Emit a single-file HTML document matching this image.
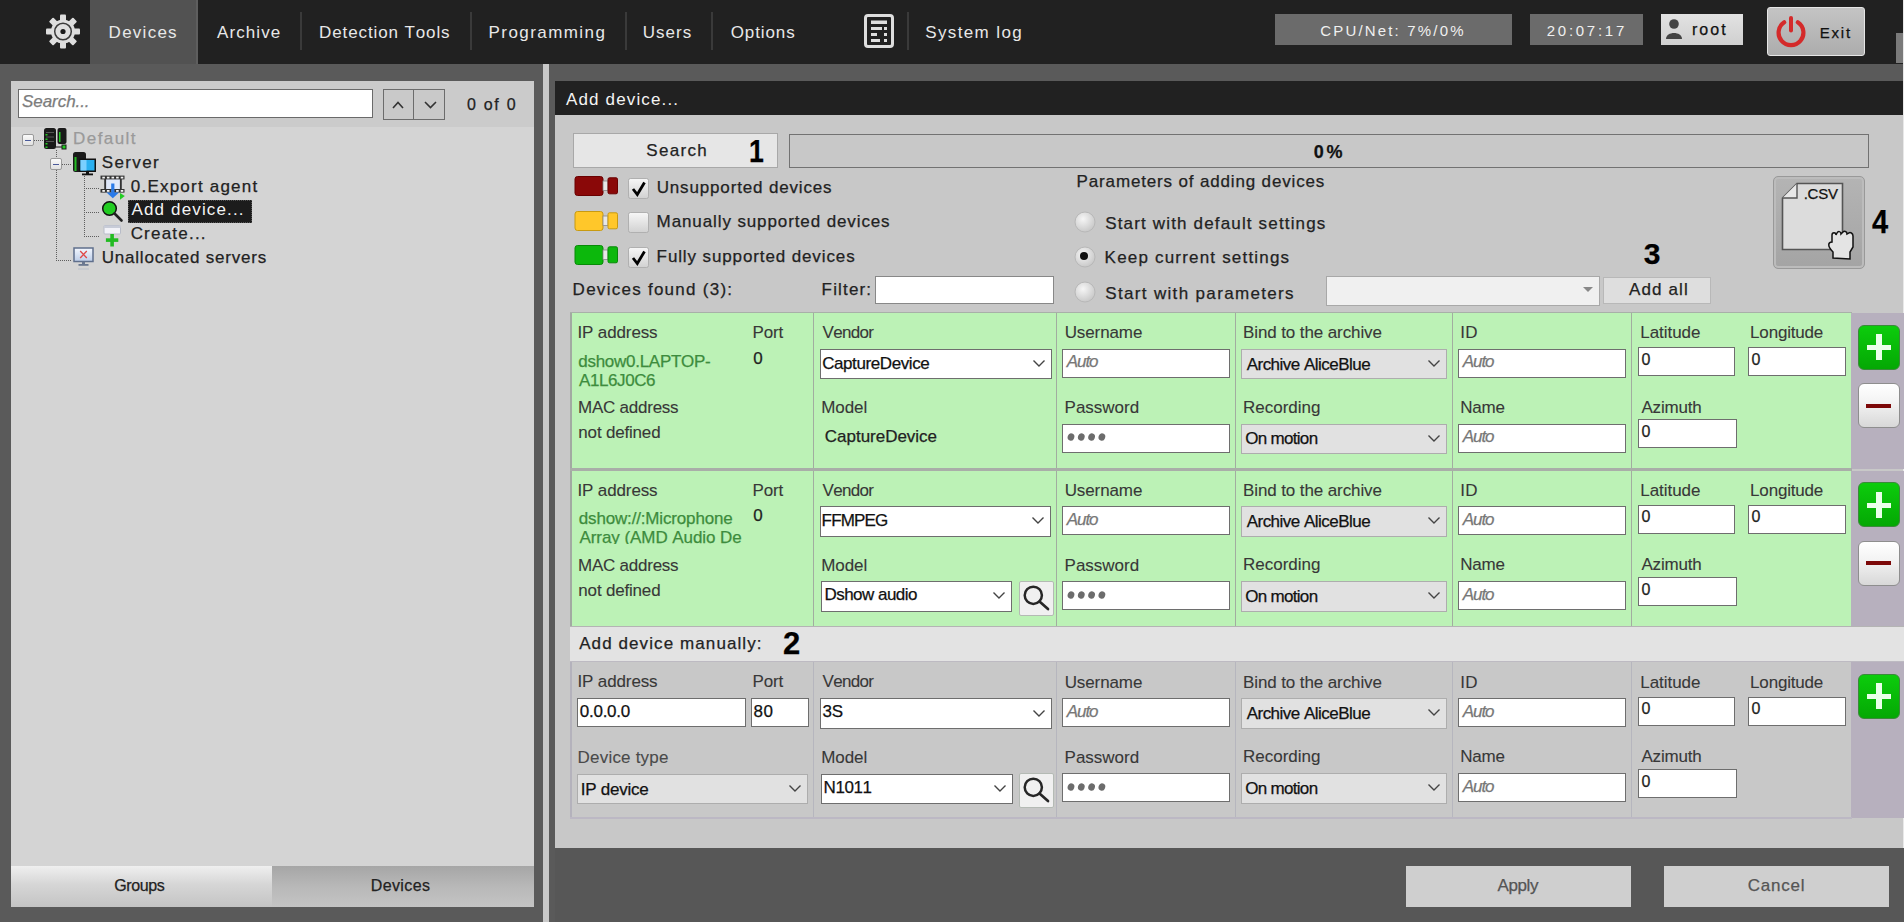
<!DOCTYPE html>
<html><head><meta charset="utf-8"><style>
html,body{margin:0;padding:0;}
body{width:1904px;height:922px;position:relative;overflow:hidden;background:#5a5a5a;font-family:"Liberation Sans",sans-serif;}
.a{position:absolute;}
.t{position:absolute;white-space:nowrap;line-height:1;font-kerning:none;-webkit-text-stroke:0.25px currentColor;}
svg.a{overflow:visible;}
</style></head><body>
<div class="a" style="left:0px;top:0px;width:1904px;height:922px;background:#5a5a5a;"></div>
<div class="a" style="left:0px;top:0px;width:1904px;height:64px;background:#212121;"></div>
<svg class="a" style="left:31px;top:0px;" width="64" height="64" viewBox="0 0 64 64"><circle cx="32" cy="31.5" r="12" fill="#dedede"/><rect x="29" y="14.5" width="6" height="8" rx="1" transform="rotate(0 32 31.5)" fill="#dedede"/><rect x="29" y="14.5" width="6" height="8" rx="1" transform="rotate(45 32 31.5)" fill="#dedede"/><rect x="29" y="14.5" width="6" height="8" rx="1" transform="rotate(90 32 31.5)" fill="#dedede"/><rect x="29" y="14.5" width="6" height="8" rx="1" transform="rotate(135 32 31.5)" fill="#dedede"/><rect x="29" y="14.5" width="6" height="8" rx="1" transform="rotate(180 32 31.5)" fill="#dedede"/><rect x="29" y="14.5" width="6" height="8" rx="1" transform="rotate(225 32 31.5)" fill="#dedede"/><rect x="29" y="14.5" width="6" height="8" rx="1" transform="rotate(270 32 31.5)" fill="#dedede"/><rect x="29" y="14.5" width="6" height="8" rx="1" transform="rotate(315 32 31.5)" fill="#dedede"/><circle cx="32" cy="31.5" r="8.3" fill="none" stroke="#3a3a3a" stroke-width="1.5"/><circle cx="32" cy="31.5" r="2.6" fill="#1a1a1a"/></svg>
<div class="a" style="left:90px;top:0px;width:108px;height:64px;background:#525252;border-right:2px solid #5e5e5e;box-sizing:border-box;"></div>
<div class="t" style="left:108.61px;top:23.61px;font-size:17px;color:#e8e8e8;letter-spacing:1.258px;-webkit-text-stroke:0;">Devices</div>
<div class="t" style="left:216.97px;top:23.61px;font-size:17px;color:#e8e8e8;letter-spacing:1.100px;-webkit-text-stroke:0;">Archive</div>
<div class="a" style="left:300px;top:12px;width:2px;height:38px;background:#3a3a3a;"></div>
<div class="t" style="left:319.11px;top:23.61px;font-size:17px;color:#e8e8e8;letter-spacing:0.885px;-webkit-text-stroke:0;">Detection Tools</div>
<div class="a" style="left:470px;top:12px;width:2px;height:38px;background:#3a3a3a;"></div>
<div class="t" style="left:488.61px;top:23.61px;font-size:17px;color:#e8e8e8;letter-spacing:1.426px;-webkit-text-stroke:0;">Programming</div>
<div class="a" style="left:625px;top:12px;width:2px;height:38px;background:#3a3a3a;"></div>
<div class="t" style="left:642.69px;top:23.61px;font-size:17px;color:#e8e8e8;letter-spacing:1.058px;-webkit-text-stroke:0;">Users</div>
<div class="a" style="left:711px;top:12px;width:2px;height:38px;background:#3a3a3a;"></div>
<div class="t" style="left:730.69px;top:23.61px;font-size:17px;color:#e8e8e8;letter-spacing:0.905px;-webkit-text-stroke:0;">Options</div>
<svg class="a" style="left:862px;top:12px;" width="34" height="38" viewBox="0 0 34 38"><rect x="3.5" y="3.5" width="27" height="31" rx="2.5" fill="none" stroke="#dedede" stroke-width="3"/><rect x="9" y="8.5" width="16" height="3.5" fill="#dedede"/><rect x="9" y="15" width="11" height="3" fill="#dedede"/><rect x="22" y="15" width="3" height="3" fill="#dedede"/><rect x="9" y="21" width="6" height="3" fill="#dedede"/><rect x="22" y="21" width="3" height="3" fill="#dedede"/><rect x="9" y="27" width="9" height="3" fill="#dedede"/><rect x="22" y="27" width="3" height="3" fill="#dedede"/></svg>
<div class="a" style="left:907px;top:12px;width:2px;height:38px;background:#3a3a3a;"></div>
<div class="t" style="left:925.23px;top:23.61px;font-size:17px;color:#e8e8e8;letter-spacing:1.376px;-webkit-text-stroke:0;">System log</div>
<div class="a" style="left:1275px;top:14px;width:237px;height:31px;background:#6b6b6b;"></div>
<div class="t" style="left:1320.24px;top:23.30px;font-size:15px;color:#f0f0f0;letter-spacing:2.173px;-webkit-text-stroke:0;">CPU/Net: 7%/0%</div>
<div class="a" style="left:1530px;top:14px;width:113px;height:31px;background:#6b6b6b;"></div>
<div class="t" style="left:1546.75px;top:23.30px;font-size:15px;color:#f0f0f0;letter-spacing:2.731px;-webkit-text-stroke:0;">20:07:17</div>
<div class="a" style="left:1661px;top:14px;width:82px;height:31px;background:linear-gradient(#e2e2e2,#d0d0d0);"></div>
<svg class="a" style="left:1665px;top:18px;" width="20" height="22" viewBox="0 0 20 22"><circle cx="9" cy="6" r="4.8" fill="#444"/><path d="M1,21 C1,13 17,13 17,21 Z" fill="#444"/></svg>
<div class="t" style="left:1691.94px;top:22.45px;font-size:16px;color:#111;letter-spacing:2.036px;">root</div>
<div class="a" style="left:1767px;top:7px;width:98px;height:49px;background:linear-gradient(#c4c4c4,#acacac);border:1px solid #e6e6e6;box-sizing:border-box;border-radius:3px;"></div>
<svg class="a" style="left:1774px;top:14px;" width="34" height="34" viewBox="0 0 34 34"><path d="M10.2,8.3 A12.4,12.4 0 1 0 23.8,8.3" fill="none" stroke="#d42a2a" stroke-width="4.2" stroke-linecap="round"/><line x1="17" y1="4" x2="17" y2="16.5" stroke="#d42a2a" stroke-width="4" stroke-linecap="round"/></svg>
<div class="t" style="left:1819.77px;top:25.30px;font-size:15px;color:#111;letter-spacing:1.778px;">Exit</div>
<div class="a" style="left:1896px;top:33px;width:8px;height:30px;background:#7a7a7a;"></div>
<div class="a" style="left:11px;top:81px;width:523px;height:826px;background:#d4d4d4;"></div>
<div class="a" style="left:11px;top:81px;width:523px;height:46px;background:#cbcbcb;"></div>
<div class="a" style="left:18px;top:88.5px;width:355px;height:29.5px;background:#fff;border:1.5px solid #6a6a6a;box-sizing:border-box;"></div>
<div class="t" style="left:22.02px;top:93.31px;font-size:17px;color:#7c7c7c;letter-spacing:-0.059px;font-style:italic;">Search...</div>
<div class="a" style="left:383px;top:89px;width:31px;height:30.5px;background:#c9c9c9;border:1.6px solid #6c6c6c;box-sizing:border-box;"></div>
<div class="a" style="left:413px;top:89px;width:32px;height:30.5px;background:#c9c9c9;border:1.6px solid #6c6c6c;box-sizing:border-box;"></div>
<svg class="a" style="left:383px;top:89px;" width="62" height="31" viewBox="0 0 62 31"><polyline points="10,19 15,13.5 20,19" fill="none" stroke="#333" stroke-width="1.6"/><polyline points="42,13 47.5,18.5 53,13" fill="none" stroke="#333" stroke-width="1.6"/></svg>
<div class="t" style="left:466.88px;top:97.15px;font-size:16px;color:#222;letter-spacing:1.744px;">0 of 0</div>
<div class="a" style="left:34px;top:140px;width:10px;height:1px;background:repeating-linear-gradient(90deg,#5e5e5e 0 1px,transparent 1px 2px);"></div>
<div class="a" style="left:56px;top:150px;width:1px;height:111px;background:repeating-linear-gradient(180deg,#5e5e5e 0 1px,transparent 1px 2px);"></div>
<div class="a" style="left:56px;top:260px;width:16px;height:1px;background:repeating-linear-gradient(90deg,#5e5e5e 0 1px,transparent 1px 2px);"></div>
<div class="a" style="left:62px;top:164px;width:10px;height:1px;background:repeating-linear-gradient(90deg,#5e5e5e 0 1px,transparent 1px 2px);"></div>
<div class="a" style="left:84px;top:176px;width:1px;height:61px;background:repeating-linear-gradient(180deg,#5e5e5e 0 1px,transparent 1px 2px);"></div>
<div class="a" style="left:84px;top:188px;width:16px;height:1px;background:repeating-linear-gradient(90deg,#5e5e5e 0 1px,transparent 1px 2px);"></div>
<div class="a" style="left:84px;top:212px;width:16px;height:1px;background:repeating-linear-gradient(90deg,#5e5e5e 0 1px,transparent 1px 2px);"></div>
<div class="a" style="left:84px;top:236px;width:16px;height:1px;background:repeating-linear-gradient(90deg,#5e5e5e 0 1px,transparent 1px 2px);"></div>
<div class="a" style="left:22px;top:134px;width:12px;height:12px;background:linear-gradient(#fafafa,#e0e0e0);border:1px solid #9a9a9a;box-sizing:border-box;border-radius:2px;"></div>
<div class="a" style="left:25px;top:139.5px;width:6px;height:1.5px;background:#4a5a9a;"></div>
<div class="a" style="left:50px;top:158px;width:12px;height:12px;background:linear-gradient(#fafafa,#e0e0e0);border:1px solid #9a9a9a;box-sizing:border-box;border-radius:2px;"></div>
<div class="a" style="left:53px;top:163.5px;width:6px;height:1.5px;background:#4a5a9a;"></div>
<svg class="a" style="left:43px;top:127px;" width="26" height="24" viewBox="0 0 26 24"><rect x="1" y="1" width="12" height="21" rx="2.5" fill="#1a1a1a"/><rect x="3" y="5" width="8" height="1" fill="#555"/><rect x="3" y="9.5" width="8" height="1" fill="#555"/><rect x="3" y="14" width="8" height="1" fill="#555"/><rect x="2.5" y="7" width="2" height="1.5" fill="#2c2"/><rect x="2.5" y="11.5" width="2" height="1.5" fill="#2c2"/><rect x="2.5" y="16" width="2" height="1.5" fill="#2c2"/><rect x="2.5" y="19.5" width="2" height="1.5" fill="#2c2"/><rect x="14.5" y="1" width="9" height="16" rx="2" fill="#1a1a1a"/><rect x="16" y="5" width="1.5" height="10" fill="#2c2"/><rect x="18.5" y="17.5" width="5" height="5" fill="#1a1a1a"/><rect x="19.5" y="18.5" width="3" height="3" fill="#2c2"/><rect x="13" y="19.5" width="6" height="1" fill="#1a1a1a"/></svg>
<div class="t" style="left:73.11px;top:129.61px;font-size:17px;color:#9a9a9a;letter-spacing:1.409px;">Default</div>
<svg class="a" style="left:72px;top:151px;" width="25" height="25" viewBox="0 0 25 25"><rect x="1" y="1" width="13" height="20" rx="2.5" fill="#1a1a1a"/><rect x="2.5" y="6" width="2" height="14" fill="#2b2"/><rect x="7" y="7.5" width="17" height="13.5" fill="#111"/><rect x="8.5" y="9" width="14" height="10.5" fill="#2ab0f0"/><rect x="8.5" y="9" width="6" height="10.5" fill="#7ad0ff"/><rect x="14" y="21" width="3" height="2" fill="#111"/><rect x="10" y="22.5" width="11" height="1.8" fill="#111"/></svg>
<div class="t" style="left:101.73px;top:153.61px;font-size:17px;color:#222;letter-spacing:1.397px;">Server</div>
<svg class="a" style="left:100px;top:175px;" width="26" height="26" viewBox="0 0 26 26"><rect x="4" y="4" width="17.5" height="10.5" fill="#dfe8fa"/><rect x="0.5" y="0.6" width="24" height="3.8" fill="#333"/><rect x="2.3" y="1.7" width="2.6" height="1.8" fill="#f4f4f4"/><rect x="6.9" y="1.7" width="2.6" height="1.8" fill="#f4f4f4"/><rect x="11.5" y="1.7" width="2.6" height="1.8" fill="#f4f4f4"/><rect x="16.1" y="1.7" width="2.6" height="1.8" fill="#f4f4f4"/><rect x="20.7" y="1.7" width="2.6" height="1.8" fill="#f4f4f4"/><rect x="0.5" y="14" width="24" height="3.6" fill="#333"/><rect x="2.3" y="15" width="2.6" height="1.8" fill="#f4f4f4"/><rect x="6.9" y="15" width="2.6" height="1.8" fill="#f4f4f4"/><rect x="11.5" y="15" width="2.6" height="1.8" fill="#f4f4f4"/><rect x="16.1" y="15" width="2.6" height="1.8" fill="#f4f4f4"/><rect x="20.7" y="15" width="2.6" height="1.8" fill="#f4f4f4"/><rect x="4.2" y="4" width="1.9" height="10" fill="#333"/><rect x="19.9" y="4" width="1.9" height="10" fill="#333"/><rect x="11.2" y="8.5" width="3.2" height="10" fill="#2a7ae8"/><path d="M6.5,17.5 L19,17.5 L12.8,23.2 Z" fill="#2a7ae8"/><path d="M20,18 L24.8,21 L20,24.8Z" fill="#22cc22"/></svg>
<div class="t" style="left:130.84px;top:177.61px;font-size:17px;color:#222;letter-spacing:1.209px;">0.Export agent</div>
<svg class="a" style="left:101px;top:200px;" width="23" height="23" viewBox="0 0 23 23"><circle cx="8.5" cy="8.5" r="6.8" fill="#22cc22" stroke="#111" stroke-width="1.5"/><line x1="13.5" y1="13.5" x2="20.5" y2="20.5" stroke="#222" stroke-width="2.6" stroke-linecap="round"/></svg>
<div class="a" style="left:127.5px;top:199.5px;width:124.5px;height:23.5px;background:#1c1c1c;border:1px dotted #555;box-sizing:border-box;"></div>
<div class="t" style="left:131.47px;top:201.11px;font-size:17px;color:#f4f4f4;letter-spacing:1.150px;-webkit-text-stroke:0;">Add device...</div>
<svg class="a" style="left:100px;top:223px;" width="26" height="26" viewBox="0 0 26 26"><rect x="4" y="2.5" width="16.5" height="8.5" rx="1" fill="#f2f2f8" stroke="#b8bcc8" stroke-width="1"/><rect x="4" y="2.5" width="16.5" height="2.5" fill="#c8ccd8"/><rect x="10.3" y="11" width="3.6" height="12.5" fill="#22bb22"/><rect x="5.9" y="15.3" width="12.4" height="3.6" fill="#22bb22"/></svg>
<div class="t" style="left:130.64px;top:225.11px;font-size:17px;color:#222;letter-spacing:1.215px;">Create...</div>
<svg class="a" style="left:73px;top:247px;" width="22" height="24" viewBox="0 0 22 24"><defs><linearGradient id="scr" x1="0" y1="0" x2="0" y2="1"><stop offset="0" stop-color="#f4f8ff"/><stop offset="1" stop-color="#bccde8"/></linearGradient></defs><rect x="1" y="1" width="19" height="13.5" fill="url(#scr)" stroke="#5f6f8c" stroke-width="1.5"/><path d="M7.2,4 L13.8,11 M13.8,4 L7.2,11" stroke="#e04848" stroke-width="1.3"/><rect x="9" y="14.5" width="3" height="3" fill="#6a7890"/><rect x="5.5" y="17" width="10" height="1.8" fill="#6a7890"/><rect x="5" y="21.5" width="11" height="1" fill="#b0b8c8" opacity="0.7"/></svg>
<div class="t" style="left:101.69px;top:249.11px;font-size:17px;color:#222;letter-spacing:0.799px;">Unallocated servers</div>
<div class="a" style="left:11px;top:866px;width:261px;height:41px;background:linear-gradient(#efefef,#d6d6d6 45%,#c4c4c4);"></div>
<div class="a" style="left:272px;top:866px;width:262px;height:41px;background:linear-gradient(#a6a6a6,#b8b8b8 50%,#c4c4c4);"></div>
<div class="t" style="left:114.20px;top:878.45px;font-size:16px;color:#222;letter-spacing:-0.037px;letter-spacing:-0.4px;">Groups</div>
<div class="t" style="left:370.69px;top:878.45px;font-size:16px;color:#222;letter-spacing:0.397px;">Devices</div>
<div class="a" style="left:543px;top:64px;width:6px;height:858px;background:#c8c8c8;"></div>
<div class="a" style="left:555px;top:81px;width:1349px;height:34px;background:#212121;"></div>
<div class="t" style="left:565.97px;top:90.61px;font-size:17px;color:#f4f4f4;letter-spacing:1.150px;-webkit-text-stroke:0;">Add device...</div>
<div class="a" style="left:555px;top:115px;width:1348px;height:733px;background:#c8c8c8;"></div>
<div class="a" style="left:1903px;top:0px;width:1px;height:922px;background:#e8e8e8;"></div>
<div class="a" style="left:572.5px;top:132.6px;width:205px;height:35.8px;background:#e6e6e6;border:1.2px solid #a8a8a8;box-sizing:border-box;"></div>
<div class="t" style="left:646.23px;top:141.61px;font-size:17px;color:#222;letter-spacing:1.322px;">Search</div>
<div class="t" style="left:748.55px;top:136.25px;font-size:31px;color:#000;font-weight:bold;transform:scaleX(0.86);transform-origin:0 0;">1</div>
<div class="a" style="left:789px;top:133.5px;width:1080px;height:34px;background:#c8c8c8;border:1.6px solid #727272;box-sizing:border-box;"></div>
<div class="t" style="left:1313.79px;top:143.46px;font-size:18px;color:#111;letter-spacing:2.671px;font-weight:bold;">0%</div>
<svg class="a" style="left:574px;top:176px;" width="45" height="21" viewBox="0 0 45 21"><rect x="1" y="0.5" width="28" height="19" rx="2.5" fill="#8a0808" stroke="#6a0000" stroke-width="1"/><rect x="29" y="5" width="5" height="9.5" fill="#e8e8e8" stroke="#888" stroke-width="0.8"/><rect x="34" y="1.8" width="9.5" height="16" rx="1.5" fill="#8a0808" stroke="#6a0000" stroke-width="1"/></svg>
<svg class="a" style="left:574px;top:211px;" width="45" height="21" viewBox="0 0 45 21"><rect x="1" y="0.5" width="28" height="19" rx="2.5" fill="#ffc72a" stroke="#c89a10" stroke-width="1"/><rect x="29" y="5" width="5" height="9.5" fill="#e8e8e8" stroke="#888" stroke-width="0.8"/><rect x="34" y="1.8" width="9.5" height="16" rx="1.5" fill="#ffc72a" stroke="#c89a10" stroke-width="1"/></svg>
<svg class="a" style="left:574px;top:245px;" width="45" height="21" viewBox="0 0 45 21"><rect x="1" y="0.5" width="28" height="19" rx="2.5" fill="#0cb80c" stroke="#078a07" stroke-width="1"/><rect x="29" y="5" width="5" height="9.5" fill="#e8e8e8" stroke="#888" stroke-width="0.8"/><rect x="34" y="1.8" width="9.5" height="16" rx="1.5" fill="#0cb80c" stroke="#078a07" stroke-width="1"/></svg>
<div class="a" style="left:627.5px;top:177.5px;width:21px;height:21px;background:linear-gradient(#f6f6f6,#d2d2d2);border:1px solid #b0b0b0;box-sizing:border-box;border-radius:2.5px;"></div>
<svg class="a" style="left:627.5px;top:177.5px;" width="21" height="21" viewBox="0 0 21 21"><path d="M5,11 L9.3,16.5 L16.5,4.5" fill="none" stroke="#000" stroke-width="2.8"/></svg>
<div class="a" style="left:627.5px;top:212px;width:21px;height:21px;background:linear-gradient(#f6f6f6,#d2d2d2);border:1px solid #b0b0b0;box-sizing:border-box;border-radius:2.5px;"></div>
<div class="a" style="left:627.5px;top:246.5px;width:21px;height:21px;background:linear-gradient(#f6f6f6,#d2d2d2);border:1px solid #b0b0b0;box-sizing:border-box;border-radius:2.5px;"></div>
<svg class="a" style="left:627.5px;top:246.5px;" width="21" height="21" viewBox="0 0 21 21"><path d="M5,11 L9.3,16.5 L16.5,4.5" fill="none" stroke="#000" stroke-width="2.8"/></svg>
<div class="t" style="left:656.69px;top:178.61px;font-size:17px;color:#222;letter-spacing:0.845px;">Unsupported devices</div>
<div class="t" style="left:656.61px;top:213.41px;font-size:17px;color:#222;letter-spacing:0.891px;">Manually supported devices</div>
<div class="t" style="left:656.61px;top:247.61px;font-size:17px;color:#222;letter-spacing:0.883px;">Fully supported devices</div>
<div class="t" style="left:572.61px;top:280.61px;font-size:17px;color:#222;letter-spacing:1.264px;">Devices found (3):</div>
<div class="t" style="left:821.61px;top:280.61px;font-size:17px;color:#222;letter-spacing:1.158px;">Filter:</div>
<div class="a" style="left:875px;top:276px;width:179px;height:28px;background:#fff;border:1px solid #888;box-sizing:border-box;"></div>
<div class="t" style="left:1076.61px;top:173.21px;font-size:17px;color:#222;letter-spacing:0.845px;">Parameters of adding devices</div>
<svg class="a" style="left:1074px;top:210.5px;" width="22" height="22" viewBox="0 0 22 22"><defs><radialGradient id="rg" cx="40%" cy="35%" r="70%"><stop offset="0" stop-color="#f6f6f6"/><stop offset="1" stop-color="#c6c6c6"/></radialGradient></defs><circle cx="11" cy="11" r="10" fill="url(#rg)" stroke="#b8b8b8" stroke-width="1"/></svg>
<svg class="a" style="left:1074px;top:245.5px;" width="22" height="22" viewBox="0 0 22 22"><defs><radialGradient id="rg" cx="40%" cy="35%" r="70%"><stop offset="0" stop-color="#f6f6f6"/><stop offset="1" stop-color="#c6c6c6"/></radialGradient></defs><circle cx="11" cy="11" r="10" fill="url(#rg)" stroke="#b8b8b8" stroke-width="1"/><circle cx="10" cy="10" r="4" fill="#111"/></svg>
<svg class="a" style="left:1074px;top:280.7px;" width="22" height="22" viewBox="0 0 22 22"><defs><radialGradient id="rg" cx="40%" cy="35%" r="70%"><stop offset="0" stop-color="#f6f6f6"/><stop offset="1" stop-color="#c6c6c6"/></radialGradient></defs><circle cx="11" cy="11" r="10" fill="url(#rg)" stroke="#b8b8b8" stroke-width="1"/></svg>
<div class="t" style="left:1105.23px;top:215.01px;font-size:17px;color:#222;letter-spacing:1.160px;">Start with default settings</div>
<div class="t" style="left:1104.61px;top:249.21px;font-size:17px;color:#222;letter-spacing:1.193px;">Keep current settings</div>
<div class="t" style="left:1105.23px;top:284.91px;font-size:17px;color:#222;letter-spacing:1.341px;">Start with parameters</div>
<div class="a" style="left:1326px;top:275.5px;width:274px;height:30px;background:#f0f0f0;border:1px solid #a8a8a8;box-sizing:border-box;"></div>
<svg class="a" style="left:1582px;top:286px;" width="12" height="8" viewBox="0 0 12 8"><path d="M1,1 L11,1 L6,6Z" fill="#888"/></svg>
<div class="a" style="left:1603px;top:276.5px;width:108px;height:27px;background:#dedede;border:1px solid #b8b8b8;box-sizing:border-box;"></div>
<div class="t" style="left:1628.97px;top:280.61px;font-size:17px;color:#222;letter-spacing:1.132px;">Add all</div>
<div class="t" style="left:1643.81px;top:239.10px;font-size:30px;color:#000;font-weight:bold;">3</div>
<div class="a" style="left:1773px;top:175.5px;width:92px;height:93px;background:linear-gradient(#b4b4b4,#a4a4a4);border:1px solid #999;box-sizing:border-box;border-radius:5px;box-shadow:inset 0 0 0 2px #bcbcbc;"></div>
<svg class="a" style="left:1781px;top:182px;" width="78" height="82" viewBox="0 0 78 82"><path d="M1.5,16 L16,1.5 L61.5,1.5 L61.5,67.5 L1.5,67.5 Z" fill="#dcdcdc" stroke="#555" stroke-width="1.6"/><path d="M1.5,16 L16,16 L16,1.5" fill="#e8e8e8" stroke="#555" stroke-width="1.4"/><path d="M52,76 L52,70 C46,64 47,60 51,60 L51,53 C51,50 55,50 55,53 L56,51 C57,49 60,49 60,52 L62,50 C63,49 66,49 66,52 L68,51 C69,50 72,51 72,54 L72,65 L69,70 L69,77 Z" fill="#e4e4e4" stroke="#111" stroke-width="1.5"/></svg>
<div class="t" style="left:1803.63px;top:186.30px;font-size:15px;color:#111;letter-spacing:-0.191px;">.CSV</div>
<div class="t" style="left:1871.50px;top:205.06px;font-size:33px;color:#000;font-weight:bold;transform:scaleX(0.88);transform-origin:0 0;">4</div>
<div class="a" style="left:570px;top:312.5px;width:1282px;height:156px;background:#bcf2b6;"></div>
<div class="a" style="left:570px;top:312.5px;width:1.6px;height:156px;background:#a2aaa2;"></div>
<div class="a" style="left:570px;top:312.0px;width:1282px;height:1px;background:#a8b0a8;"></div>
<div class="a" style="left:813.3px;top:312.5px;width:1.2px;height:156px;background:#a2ada0;"></div>
<div class="a" style="left:1056.3px;top:312.5px;width:1.2px;height:156px;background:#a2ada0;"></div>
<div class="a" style="left:1235.3px;top:312.5px;width:1.2px;height:156px;background:#a2ada0;"></div>
<div class="a" style="left:1452.3px;top:312.5px;width:1.2px;height:156px;background:#a2ada0;"></div>
<div class="a" style="left:1631.3px;top:312.5px;width:1.2px;height:156px;background:#a2ada0;"></div>
<div class="a" style="left:1851px;top:312.5px;width:53px;height:156px;background:#b7b0be;"></div>
<div class="t" style="left:577.43px;top:324.21px;font-size:17px;color:#383838;letter-spacing:-0.120px;-webkit-text-stroke:0.1px currentColor;">IP address</div>
<div class="t" style="left:752.61px;top:324.21px;font-size:17px;color:#383838;letter-spacing:-0.220px;-webkit-text-stroke:0.1px currentColor;">Port</div>
<div class="t" style="left:578.29px;top:352.51px;font-size:17px;color:#3d8c3d;letter-spacing:-0.276px;">dshow0.LAPTOP-</div>
<div class="t" style="left:578.97px;top:371.61px;font-size:17px;color:#3d8c3d;letter-spacing:-0.401px;">A1L6J0C6</div>
<div class="t" style="left:753.34px;top:349.61px;font-size:17px;color:#222;">0</div>
<div class="t" style="left:578.11px;top:399.31px;font-size:17px;color:#383838;letter-spacing:-0.247px;-webkit-text-stroke:0.1px currentColor;">MAC address</div>
<div class="t" style="left:578.37px;top:424.21px;font-size:17px;color:#383838;letter-spacing:-0.190px;-webkit-text-stroke:0.1px currentColor;">not defined</div>
<div class="t" style="left:822.53px;top:324.21px;font-size:17px;color:#383838;letter-spacing:-0.692px;-webkit-text-stroke:0.1px currentColor;">Vendor</div>
<div class="a" style="left:819.5px;top:348.5px;width:232px;height:30.5px;background:#fff;border:1.5px solid #6e6e6e;box-sizing:border-box;"></div>
<svg class="a" style="left:1031.5px;top:358.75px;" width="14" height="9" viewBox="0 0 14 9"><polyline points="1.5,1.5 7,7 12.5,1.5" fill="none" stroke="#444" stroke-width="1.4"/></svg>
<div class="t" style="left:822.14px;top:354.61px;font-size:17px;color:#111;letter-spacing:-0.402px;">CaptureDevice</div>
<div class="t" style="left:821.21px;top:398.91px;font-size:17px;color:#383838;letter-spacing:-0.068px;-webkit-text-stroke:0.1px currentColor;">Model</div>
<div class="t" style="left:824.84px;top:428.41px;font-size:17px;color:#222;letter-spacing:-0.019px;">CaptureDevice</div>
<div class="t" style="left:1064.69px;top:324.21px;font-size:17px;color:#383838;letter-spacing:-0.107px;-webkit-text-stroke:0.1px currentColor;">Username</div>
<div class="a" style="left:1062px;top:348.5px;width:168px;height:29px;background:#fff;border:1.5px solid #6e6e6e;box-sizing:border-box;"></div>
<div class="t" style="left:1066.84px;top:353.21px;font-size:17px;color:#777;letter-spacing:-1.090px;font-style:italic;">Auto</div>
<div class="t" style="left:1064.61px;top:399.21px;font-size:17px;color:#383838;letter-spacing:-0.021px;-webkit-text-stroke:0.1px currentColor;">Password</div>
<div class="a" style="left:1062px;top:423.7px;width:168px;height:29px;background:#fff;border:1.5px solid #6e6e6e;box-sizing:border-box;"></div>
<svg class="a" style="left:1066px;top:430px;" width="44" height="14" viewBox="0 0 44 14"><ellipse cx="5.0" cy="7" rx="3.3" ry="3.7" transform="rotate(20 5.0 7)" fill="#6c6c6c"/><ellipse cx="15.3" cy="7" rx="3.3" ry="3.7" transform="rotate(20 15.3 7)" fill="#6c6c6c"/><ellipse cx="25.6" cy="7" rx="3.3" ry="3.7" transform="rotate(20 25.6 7)" fill="#6c6c6c"/><ellipse cx="35.9" cy="7" rx="3.3" ry="3.7" transform="rotate(20 35.9 7)" fill="#6c6c6c"/></svg>
<div class="t" style="left:1243.01px;top:324.21px;font-size:17px;color:#383838;letter-spacing:-0.103px;-webkit-text-stroke:0.1px currentColor;">Bind to the archive</div>
<div class="a" style="left:1241px;top:348.5px;width:206px;height:30.5px;background:#e1e1e1;border:1px solid #adadad;box-sizing:border-box;"></div>
<svg class="a" style="left:1427px;top:358.75px;" width="14" height="9" viewBox="0 0 14 9"><polyline points="1.5,1.5 7,7 12.5,1.5" fill="none" stroke="#444" stroke-width="1.4"/></svg>
<div class="t" style="left:1246.67px;top:355.51px;font-size:17px;color:#111;letter-spacing:-0.512px;">Archive AliceBlue</div>
<div class="t" style="left:1243.01px;top:398.91px;font-size:17px;color:#383838;-webkit-text-stroke:0.1px currentColor;">Recording</div>
<div class="a" style="left:1241px;top:423.7px;width:206px;height:30.5px;background:#e1e1e1;border:1px solid #adadad;box-sizing:border-box;"></div>
<svg class="a" style="left:1427px;top:433.95px;" width="14" height="9" viewBox="0 0 14 9"><polyline points="1.5,1.5 7,7 12.5,1.5" fill="none" stroke="#444" stroke-width="1.4"/></svg>
<div class="t" style="left:1245.19px;top:430.11px;font-size:17px;color:#111;letter-spacing:-0.690px;">On motion</div>
<div class="t" style="left:1460.13px;top:324.21px;font-size:17px;color:#383838;letter-spacing:0.382px;-webkit-text-stroke:0.1px currentColor;">ID</div>
<div class="a" style="left:1458px;top:348.5px;width:168px;height:29px;background:#fff;border:1.5px solid #6e6e6e;box-sizing:border-box;"></div>
<div class="t" style="left:1462.84px;top:353.21px;font-size:17px;color:#777;letter-spacing:-1.090px;font-style:italic;">Auto</div>
<div class="t" style="left:1460.31px;top:398.91px;font-size:17px;color:#383838;letter-spacing:-0.232px;-webkit-text-stroke:0.1px currentColor;">Name</div>
<div class="a" style="left:1458px;top:423.7px;width:168px;height:29px;background:#fff;border:1.5px solid #6e6e6e;box-sizing:border-box;"></div>
<div class="t" style="left:1462.84px;top:428.31px;font-size:17px;color:#777;letter-spacing:-1.090px;font-style:italic;">Auto</div>
<div class="t" style="left:1640.31px;top:324.21px;font-size:17px;color:#383838;letter-spacing:-0.049px;-webkit-text-stroke:0.1px currentColor;">Latitude</div>
<div class="a" style="left:1638px;top:347px;width:97px;height:29px;background:#fff;border:1.5px solid #6e6e6e;box-sizing:border-box;"></div>
<div class="t" style="left:1641.38px;top:351.95px;font-size:16px;color:#222;">0</div>
<div class="t" style="left:1750.11px;top:324.21px;font-size:17px;color:#383838;letter-spacing:-0.192px;-webkit-text-stroke:0.1px currentColor;">Longitude</div>
<div class="a" style="left:1748px;top:347px;width:98px;height:29px;background:#fff;border:1.5px solid #6e6e6e;box-sizing:border-box;"></div>
<div class="t" style="left:1751.38px;top:351.95px;font-size:16px;color:#222;">0</div>
<div class="t" style="left:1641.47px;top:398.91px;font-size:17px;color:#383838;letter-spacing:-0.212px;-webkit-text-stroke:0.1px currentColor;">Azimuth</div>
<div class="a" style="left:1638px;top:419px;width:98.5px;height:29px;background:#fff;border:1.5px solid #6e6e6e;box-sizing:border-box;"></div>
<div class="t" style="left:1641.38px;top:424.05px;font-size:16px;color:#222;">0</div>
<div class="a" style="left:1857.5px;top:324.8px;width:42.5px;height:45px;background:linear-gradient(#0ccc0c,#04a804);border:1px solid #3a8a3a;box-sizing:border-box;border-radius:6px;"></div>
<div class="a" style="left:1866.7px;top:345.1px;width:24.6px;height:5px;background:#eaffea;"></div>
<div class="a" style="left:1876.2px;top:334.3px;width:5.5px;height:26px;background:#eaffea;"></div>
<div class="a" style="left:1857.5px;top:383.3px;width:42px;height:45px;background:linear-gradient(#ffffff,#f4f4f4 40%,#d8d8d8);border:1.5px solid #8e8e8e;box-sizing:border-box;border-radius:6px;"></div>
<div class="a" style="left:1866.4px;top:403.5px;width:24.9px;height:4.3px;background:#7c0808;"></div>
<div class="a" style="left:570px;top:468px;width:1282px;height:2.5px;background:#a9aea8;"></div>
<div class="a" style="left:570px;top:470.5px;width:1282px;height:155.5px;background:#bcf2b6;"></div>
<div class="a" style="left:570px;top:470.5px;width:1.6px;height:155.5px;background:#a2aaa2;"></div>
<div class="a" style="left:813.3px;top:470.5px;width:1.2px;height:155.5px;background:#a2ada0;"></div>
<div class="a" style="left:1056.3px;top:470.5px;width:1.2px;height:155.5px;background:#a2ada0;"></div>
<div class="a" style="left:1235.3px;top:470.5px;width:1.2px;height:155.5px;background:#a2ada0;"></div>
<div class="a" style="left:1452.3px;top:470.5px;width:1.2px;height:155.5px;background:#a2ada0;"></div>
<div class="a" style="left:1631.3px;top:470.5px;width:1.2px;height:155.5px;background:#a2ada0;"></div>
<div class="a" style="left:1851px;top:470.5px;width:53px;height:155.5px;background:#b7b0be;"></div>
<div class="t" style="left:577.43px;top:481.71px;font-size:17px;color:#383838;letter-spacing:-0.120px;-webkit-text-stroke:0.1px currentColor;">IP address</div>
<div class="t" style="left:752.61px;top:481.71px;font-size:17px;color:#383838;letter-spacing:-0.220px;-webkit-text-stroke:0.1px currentColor;">Port</div>
<div class="t" style="left:578.79px;top:509.91px;font-size:17px;color:#3d8c3d;letter-spacing:-0.161px;">dshow://:Microphone</div>
<div class="a" style="left:570px;top:528px;width:240px;height:16.2px;overflow:hidden">
<div class="t" style="left:9.47px;top:1.11px;font-size:17px;color:#3d8c3d;letter-spacing:-0.064px;">Array (AMD Audio De</div>
</div>
<div class="t" style="left:753.34px;top:507.11px;font-size:17px;color:#222;">0</div>
<div class="t" style="left:578.11px;top:556.81px;font-size:17px;color:#383838;letter-spacing:-0.247px;-webkit-text-stroke:0.1px currentColor;">MAC address</div>
<div class="t" style="left:578.37px;top:581.71px;font-size:17px;color:#383838;letter-spacing:-0.190px;-webkit-text-stroke:0.1px currentColor;">not defined</div>
<div class="t" style="left:822.53px;top:481.71px;font-size:17px;color:#383838;letter-spacing:-0.692px;-webkit-text-stroke:0.1px currentColor;">Vendor</div>
<div class="a" style="left:819.5px;top:506px;width:231.5px;height:30.5px;background:#fff;border:1.5px solid #6e6e6e;box-sizing:border-box;"></div>
<svg class="a" style="left:1031.0px;top:516.25px;" width="14" height="9" viewBox="0 0 14 9"><polyline points="1.5,1.5 7,7 12.5,1.5" fill="none" stroke="#444" stroke-width="1.4"/></svg>
<div class="t" style="left:821.61px;top:511.71px;font-size:17px;color:#111;letter-spacing:-0.833px;">FFMPEG</div>
<div class="t" style="left:821.21px;top:556.81px;font-size:17px;color:#383838;letter-spacing:-0.068px;-webkit-text-stroke:0.1px currentColor;">Model</div>
<div class="a" style="left:821px;top:581px;width:191px;height:30.5px;background:#fff;border:1.5px solid #6e6e6e;box-sizing:border-box;"></div>
<svg class="a" style="left:992px;top:591.25px;" width="14" height="9" viewBox="0 0 14 9"><polyline points="1.5,1.5 7,7 12.5,1.5" fill="none" stroke="#444" stroke-width="1.4"/></svg>
<div class="t" style="left:824.41px;top:586.41px;font-size:17px;color:#111;letter-spacing:-0.517px;">Dshow audio</div>
<div class="a" style="left:1019.0px;top:581.0px;width:34.5px;height:34.5px;background:#f0f0f0;border:1.5px solid #b4bab4;box-sizing:border-box;border-radius:2px;"></div>
<svg class="a" style="left:1019.5px;top:581.5px;" width="34" height="34" viewBox="0 0 34 34"><circle cx="13.3" cy="13.3" r="8.6" fill="none" stroke="#262626" stroke-width="2.5"/><line x1="19.5" y1="19.5" x2="28" y2="27" stroke="#262626" stroke-width="2.7" stroke-linecap="round"/></svg>
<div class="t" style="left:1064.69px;top:481.71px;font-size:17px;color:#383838;letter-spacing:-0.107px;-webkit-text-stroke:0.1px currentColor;">Username</div>
<div class="a" style="left:1062px;top:506.0px;width:168px;height:29px;background:#fff;border:1.5px solid #6e6e6e;box-sizing:border-box;"></div>
<div class="t" style="left:1066.84px;top:510.71px;font-size:17px;color:#777;letter-spacing:-1.090px;font-style:italic;">Auto</div>
<div class="t" style="left:1064.61px;top:556.71px;font-size:17px;color:#383838;letter-spacing:-0.021px;-webkit-text-stroke:0.1px currentColor;">Password</div>
<div class="a" style="left:1062px;top:581.2px;width:168px;height:29px;background:#fff;border:1.5px solid #6e6e6e;box-sizing:border-box;"></div>
<svg class="a" style="left:1066px;top:587.5px;" width="44" height="14" viewBox="0 0 44 14"><ellipse cx="5.0" cy="7" rx="3.3" ry="3.7" transform="rotate(20 5.0 7)" fill="#6c6c6c"/><ellipse cx="15.3" cy="7" rx="3.3" ry="3.7" transform="rotate(20 15.3 7)" fill="#6c6c6c"/><ellipse cx="25.6" cy="7" rx="3.3" ry="3.7" transform="rotate(20 25.6 7)" fill="#6c6c6c"/><ellipse cx="35.9" cy="7" rx="3.3" ry="3.7" transform="rotate(20 35.9 7)" fill="#6c6c6c"/></svg>
<div class="t" style="left:1243.01px;top:481.71px;font-size:17px;color:#383838;letter-spacing:-0.103px;-webkit-text-stroke:0.1px currentColor;">Bind to the archive</div>
<div class="a" style="left:1241px;top:506.0px;width:206px;height:30.5px;background:#e1e1e1;border:1px solid #adadad;box-sizing:border-box;"></div>
<svg class="a" style="left:1427px;top:516.25px;" width="14" height="9" viewBox="0 0 14 9"><polyline points="1.5,1.5 7,7 12.5,1.5" fill="none" stroke="#444" stroke-width="1.4"/></svg>
<div class="t" style="left:1246.67px;top:513.01px;font-size:17px;color:#111;letter-spacing:-0.512px;">Archive AliceBlue</div>
<div class="t" style="left:1243.01px;top:556.41px;font-size:17px;color:#383838;-webkit-text-stroke:0.1px currentColor;">Recording</div>
<div class="a" style="left:1241px;top:581.2px;width:206px;height:30.5px;background:#e1e1e1;border:1px solid #adadad;box-sizing:border-box;"></div>
<svg class="a" style="left:1427px;top:591.45px;" width="14" height="9" viewBox="0 0 14 9"><polyline points="1.5,1.5 7,7 12.5,1.5" fill="none" stroke="#444" stroke-width="1.4"/></svg>
<div class="t" style="left:1245.19px;top:587.61px;font-size:17px;color:#111;letter-spacing:-0.690px;">On motion</div>
<div class="t" style="left:1460.13px;top:481.71px;font-size:17px;color:#383838;letter-spacing:0.382px;-webkit-text-stroke:0.1px currentColor;">ID</div>
<div class="a" style="left:1458px;top:506.0px;width:168px;height:29px;background:#fff;border:1.5px solid #6e6e6e;box-sizing:border-box;"></div>
<div class="t" style="left:1462.84px;top:510.71px;font-size:17px;color:#777;letter-spacing:-1.090px;font-style:italic;">Auto</div>
<div class="t" style="left:1460.31px;top:556.41px;font-size:17px;color:#383838;letter-spacing:-0.232px;-webkit-text-stroke:0.1px currentColor;">Name</div>
<div class="a" style="left:1458px;top:581.2px;width:168px;height:29px;background:#fff;border:1.5px solid #6e6e6e;box-sizing:border-box;"></div>
<div class="t" style="left:1462.84px;top:585.81px;font-size:17px;color:#777;letter-spacing:-1.090px;font-style:italic;">Auto</div>
<div class="t" style="left:1640.31px;top:481.71px;font-size:17px;color:#383838;letter-spacing:-0.049px;-webkit-text-stroke:0.1px currentColor;">Latitude</div>
<div class="a" style="left:1638px;top:504.5px;width:97px;height:29px;background:#fff;border:1.5px solid #6e6e6e;box-sizing:border-box;"></div>
<div class="t" style="left:1641.38px;top:509.45px;font-size:16px;color:#222;">0</div>
<div class="t" style="left:1750.11px;top:481.71px;font-size:17px;color:#383838;letter-spacing:-0.192px;-webkit-text-stroke:0.1px currentColor;">Longitude</div>
<div class="a" style="left:1748px;top:504.5px;width:98px;height:29px;background:#fff;border:1.5px solid #6e6e6e;box-sizing:border-box;"></div>
<div class="t" style="left:1751.38px;top:509.45px;font-size:16px;color:#222;">0</div>
<div class="t" style="left:1641.47px;top:556.41px;font-size:17px;color:#383838;letter-spacing:-0.212px;-webkit-text-stroke:0.1px currentColor;">Azimuth</div>
<div class="a" style="left:1638px;top:576.5px;width:98.5px;height:29px;background:#fff;border:1.5px solid #6e6e6e;box-sizing:border-box;"></div>
<div class="t" style="left:1641.38px;top:581.55px;font-size:16px;color:#222;">0</div>
<div class="a" style="left:1857.5px;top:482.3px;width:42.5px;height:45px;background:linear-gradient(#0ccc0c,#04a804);border:1px solid #3a8a3a;box-sizing:border-box;border-radius:6px;"></div>
<div class="a" style="left:1866.7px;top:502.6px;width:24.6px;height:5px;background:#eaffea;"></div>
<div class="a" style="left:1876.2px;top:491.8px;width:5.5px;height:26px;background:#eaffea;"></div>
<div class="a" style="left:1857.5px;top:540.8px;width:42px;height:45px;background:linear-gradient(#ffffff,#f4f4f4 40%,#d8d8d8);border:1.5px solid #8e8e8e;box-sizing:border-box;border-radius:6px;"></div>
<div class="a" style="left:1866.4px;top:561.0px;width:24.9px;height:4.3px;background:#7c0808;"></div>
<div class="a" style="left:570px;top:625.5px;width:1334px;height:1.5px;background:#b4b4b4;"></div>
<div class="a" style="left:570px;top:627px;width:1334px;height:35px;background:#e3e3e3;"></div>
<div class="t" style="left:579.17px;top:634.71px;font-size:17px;color:#222;letter-spacing:1.094px;">Add device manually:</div>
<div class="t" style="left:782.93px;top:627.75px;font-size:31px;color:#000;font-weight:bold;">2</div>
<div class="a" style="left:570px;top:661px;width:1334px;height:1.5px;background:#bdbac2;"></div>
<div class="a" style="left:570px;top:662px;width:1282px;height:155.5px;background:#c8c8c8;"></div>
<div class="a" style="left:570px;top:662px;width:1.6px;height:155.5px;background:#b4b2bc;"></div>
<div class="a" style="left:813.3px;top:662px;width:1.2px;height:155.5px;background:#b6b6be;"></div>
<div class="a" style="left:1056.3px;top:662px;width:1.2px;height:155.5px;background:#b6b6be;"></div>
<div class="a" style="left:1235.3px;top:662px;width:1.2px;height:155.5px;background:#b6b6be;"></div>
<div class="a" style="left:1452.3px;top:662px;width:1.2px;height:155.5px;background:#b6b6be;"></div>
<div class="a" style="left:1631.3px;top:662px;width:1.2px;height:155.5px;background:#b6b6be;"></div>
<div class="a" style="left:1851px;top:662px;width:53px;height:155.5px;background:#b7b0be;"></div>
<div class="t" style="left:577.43px;top:673.01px;font-size:17px;color:#383838;letter-spacing:-0.120px;-webkit-text-stroke:0.1px currentColor;">IP address</div>
<div class="t" style="left:752.61px;top:673.01px;font-size:17px;color:#383838;letter-spacing:-0.220px;-webkit-text-stroke:0.1px currentColor;">Port</div>
<div class="a" style="left:576.5px;top:698px;width:169px;height:29px;background:#fff;border:1.5px solid #6e6e6e;box-sizing:border-box;"></div>
<div class="t" style="left:579.84px;top:703.21px;font-size:17px;color:#111;letter-spacing:-0.277px;">0.0.0.0</div>
<div class="a" style="left:750.5px;top:698px;width:58px;height:29px;background:#fff;border:1.5px solid #6e6e6e;box-sizing:border-box;"></div>
<div class="t" style="left:753.46px;top:703.21px;font-size:17px;color:#111;letter-spacing:0.494px;">80</div>
<div class="t" style="left:822.53px;top:673.01px;font-size:17px;color:#383838;letter-spacing:-0.692px;-webkit-text-stroke:0.1px currentColor;">Vendor</div>
<div class="a" style="left:819.5px;top:698px;width:232px;height:31px;background:#fff;border:1.5px solid #6e6e6e;box-sizing:border-box;"></div>
<svg class="a" style="left:1031.5px;top:708.5px;" width="14" height="9" viewBox="0 0 14 9"><polyline points="1.5,1.5 7,7 12.5,1.5" fill="none" stroke="#444" stroke-width="1.4"/></svg>
<div class="t" style="left:822.55px;top:703.21px;font-size:17px;color:#111;letter-spacing:-0.366px;">3S</div>
<div class="t" style="left:577.61px;top:748.61px;font-size:17px;color:#4a4a4a;letter-spacing:0.193px;-webkit-text-stroke:0.1px currentColor;">Device type</div>
<div class="a" style="left:576.5px;top:773.5px;width:231px;height:30px;background:#e1e1e1;border:1px solid #adadad;box-sizing:border-box;"></div>
<svg class="a" style="left:787.5px;top:783.5px;" width="14" height="9" viewBox="0 0 14 9"><polyline points="1.5,1.5 7,7 12.5,1.5" fill="none" stroke="#444" stroke-width="1.4"/></svg>
<div class="t" style="left:580.73px;top:780.61px;font-size:17px;color:#111;letter-spacing:-0.238px;">IP device</div>
<div class="t" style="left:821.21px;top:748.61px;font-size:17px;color:#383838;letter-spacing:-0.068px;-webkit-text-stroke:0.1px currentColor;">Model</div>
<div class="a" style="left:820.5px;top:773.5px;width:192px;height:30px;background:#fff;border:1.5px solid #6e6e6e;box-sizing:border-box;"></div>
<svg class="a" style="left:992.5px;top:783.5px;" width="14" height="9" viewBox="0 0 14 9"><polyline points="1.5,1.5 7,7 12.5,1.5" fill="none" stroke="#444" stroke-width="1.4"/></svg>
<div class="t" style="left:823.61px;top:779.31px;font-size:17px;color:#111;letter-spacing:-0.468px;">N1011</div>
<div class="a" style="left:1019.0px;top:773.0px;width:34.5px;height:34.5px;background:#f0f0f0;border:1.5px solid #b4bab4;box-sizing:border-box;border-radius:2px;"></div>
<svg class="a" style="left:1019.5px;top:773.5px;" width="34" height="34" viewBox="0 0 34 34"><circle cx="13.3" cy="13.3" r="8.6" fill="none" stroke="#262626" stroke-width="2.5"/><line x1="19.5" y1="19.5" x2="28" y2="27" stroke="#262626" stroke-width="2.7" stroke-linecap="round"/></svg>
<div class="t" style="left:1064.69px;top:673.71px;font-size:17px;color:#383838;letter-spacing:-0.107px;-webkit-text-stroke:0.1px currentColor;">Username</div>
<div class="a" style="left:1062px;top:698.0px;width:168px;height:29px;background:#fff;border:1.5px solid #6e6e6e;box-sizing:border-box;"></div>
<div class="t" style="left:1066.84px;top:702.71px;font-size:17px;color:#777;letter-spacing:-1.090px;font-style:italic;">Auto</div>
<div class="t" style="left:1064.61px;top:748.71px;font-size:17px;color:#383838;letter-spacing:-0.021px;-webkit-text-stroke:0.1px currentColor;">Password</div>
<div class="a" style="left:1062px;top:773.2px;width:168px;height:29px;background:#fff;border:1.5px solid #6e6e6e;box-sizing:border-box;"></div>
<svg class="a" style="left:1066px;top:779.5px;" width="44" height="14" viewBox="0 0 44 14"><ellipse cx="5.0" cy="7" rx="3.3" ry="3.7" transform="rotate(20 5.0 7)" fill="#6c6c6c"/><ellipse cx="15.3" cy="7" rx="3.3" ry="3.7" transform="rotate(20 15.3 7)" fill="#6c6c6c"/><ellipse cx="25.6" cy="7" rx="3.3" ry="3.7" transform="rotate(20 25.6 7)" fill="#6c6c6c"/><ellipse cx="35.9" cy="7" rx="3.3" ry="3.7" transform="rotate(20 35.9 7)" fill="#6c6c6c"/></svg>
<div class="t" style="left:1243.01px;top:673.71px;font-size:17px;color:#383838;letter-spacing:-0.103px;-webkit-text-stroke:0.1px currentColor;">Bind to the archive</div>
<div class="a" style="left:1241px;top:698.0px;width:206px;height:30.5px;background:#e1e1e1;border:1px solid #adadad;box-sizing:border-box;"></div>
<svg class="a" style="left:1427px;top:708.25px;" width="14" height="9" viewBox="0 0 14 9"><polyline points="1.5,1.5 7,7 12.5,1.5" fill="none" stroke="#444" stroke-width="1.4"/></svg>
<div class="t" style="left:1246.67px;top:705.01px;font-size:17px;color:#111;letter-spacing:-0.512px;">Archive AliceBlue</div>
<div class="t" style="left:1243.01px;top:748.41px;font-size:17px;color:#383838;-webkit-text-stroke:0.1px currentColor;">Recording</div>
<div class="a" style="left:1241px;top:773.2px;width:206px;height:30.5px;background:#e1e1e1;border:1px solid #adadad;box-sizing:border-box;"></div>
<svg class="a" style="left:1427px;top:783.45px;" width="14" height="9" viewBox="0 0 14 9"><polyline points="1.5,1.5 7,7 12.5,1.5" fill="none" stroke="#444" stroke-width="1.4"/></svg>
<div class="t" style="left:1245.19px;top:779.61px;font-size:17px;color:#111;letter-spacing:-0.690px;">On motion</div>
<div class="t" style="left:1460.13px;top:673.71px;font-size:17px;color:#383838;letter-spacing:0.382px;-webkit-text-stroke:0.1px currentColor;">ID</div>
<div class="a" style="left:1458px;top:698.0px;width:168px;height:29px;background:#fff;border:1.5px solid #6e6e6e;box-sizing:border-box;"></div>
<div class="t" style="left:1462.84px;top:702.71px;font-size:17px;color:#777;letter-spacing:-1.090px;font-style:italic;">Auto</div>
<div class="t" style="left:1460.31px;top:748.41px;font-size:17px;color:#383838;letter-spacing:-0.232px;-webkit-text-stroke:0.1px currentColor;">Name</div>
<div class="a" style="left:1458px;top:773.2px;width:168px;height:29px;background:#fff;border:1.5px solid #6e6e6e;box-sizing:border-box;"></div>
<div class="t" style="left:1462.84px;top:777.81px;font-size:17px;color:#777;letter-spacing:-1.090px;font-style:italic;">Auto</div>
<div class="t" style="left:1640.31px;top:673.71px;font-size:17px;color:#383838;letter-spacing:-0.049px;-webkit-text-stroke:0.1px currentColor;">Latitude</div>
<div class="a" style="left:1638px;top:696.5px;width:97px;height:29px;background:#fff;border:1.5px solid #6e6e6e;box-sizing:border-box;"></div>
<div class="t" style="left:1641.38px;top:701.45px;font-size:16px;color:#222;">0</div>
<div class="t" style="left:1750.11px;top:673.71px;font-size:17px;color:#383838;letter-spacing:-0.192px;-webkit-text-stroke:0.1px currentColor;">Longitude</div>
<div class="a" style="left:1748px;top:696.5px;width:98px;height:29px;background:#fff;border:1.5px solid #6e6e6e;box-sizing:border-box;"></div>
<div class="t" style="left:1751.38px;top:701.45px;font-size:16px;color:#222;">0</div>
<div class="t" style="left:1641.47px;top:748.41px;font-size:17px;color:#383838;letter-spacing:-0.212px;-webkit-text-stroke:0.1px currentColor;">Azimuth</div>
<div class="a" style="left:1638px;top:768.5px;width:98.5px;height:29px;background:#fff;border:1.5px solid #6e6e6e;box-sizing:border-box;"></div>
<div class="t" style="left:1641.38px;top:773.55px;font-size:16px;color:#222;">0</div>
<div class="a" style="left:1857.5px;top:673.9px;width:42.5px;height:45px;background:linear-gradient(#0ccc0c,#04a804);border:1px solid #3a8a3a;box-sizing:border-box;border-radius:6px;"></div>
<div class="a" style="left:1866.7px;top:694.1999999999999px;width:24.6px;height:5px;background:#eaffea;"></div>
<div class="a" style="left:1876.2px;top:683.4px;width:5.5px;height:26px;background:#eaffea;"></div>
<div class="a" style="left:570px;top:817px;width:1282px;height:1.5px;background:#bcb8c4;"></div>
<div class="a" style="left:555px;top:848px;width:1349px;height:74px;background:#575757;"></div>
<div class="a" style="left:1405.5px;top:866px;width:225px;height:41px;background:#cfcfcf;"></div>
<div class="t" style="left:1497.47px;top:877.41px;font-size:17px;color:#555;letter-spacing:-0.365px;">Apply</div>
<div class="a" style="left:1663.5px;top:866px;width:225px;height:41px;background:#cfcfcf;"></div>
<div class="t" style="left:1747.64px;top:877.41px;font-size:17px;color:#555;letter-spacing:0.817px;">Cancel</div>
</body></html>
